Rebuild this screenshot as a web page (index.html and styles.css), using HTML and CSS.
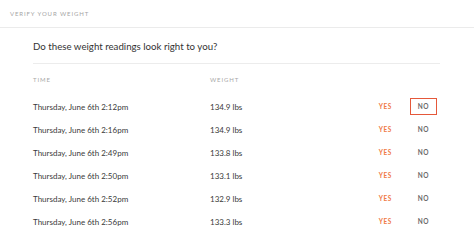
FILE: index.html
```html
<!DOCTYPE html>
<html lang="en">
<head>
  <meta charset="UTF-8">
  <title>Verify your weight</title>
  <link rel="stylesheet" href="styles.css">
</head>
<body>

  <!-- Titre -->
  <div class="header">VERIFY YOUR WEIGHT</div>

  <div class="content">
    <div class="question">Do these weight readings look right to you?</div>

    <div class="row labels">
      <span class="time">TIME</span>
      <span class="weight">WEIGHT</span>
    </div>

    <div class="row">
      <span class="time">Thursday, June 6th 2:12pm</span>
      <span class="weight">134.9 lbs</span>
      <button class="yes">YES</button>
      <button class="no selected">NO</button>
    </div>
    <div class="row">
      <span class="time">Thursday, June 6th 2:16pm</span>
      <span class="weight">134.9 lbs</span>
      <button class="yes">YES</button>
      <button class="no">NO</button>
    </div>
    <div class="row">
      <span class="time">Thursday, June 6th 2:49pm</span>
      <span class="weight">133.8 lbs</span>
      <button class="yes">YES</button>
      <button class="no">NO</button>
    </div>
    <div class="row">
      <span class="time">Thursday, June 6th 2:50pm</span>
      <span class="weight">133.1 lbs</span>
      <button class="yes">YES</button>
      <button class="no">NO</button>
    </div>
    <div class="row">
      <span class="time">Thursday, June 6th 2:52pm</span>
      <span class="weight">132.9 lbs</span>
      <button class="yes">YES</button>
      <button class="no">NO</button>
    </div>
    <div class="row">
      <span class="time">Thursday, June 6th 2:56pm</span>
      <span class="weight">133.3 lbs</span>
      <button class="yes">YES</button>
      <button class="no">NO</button>
    </div>
  </div>

</body>
</html>
```

FILE: styles.css
```css
body {
  margin: 0;
  font-family: Lato, "Open Sans", sans-serif;
  background: #ffffff;
  color: #3a3a3a;
}

.header {
  height: 27px;
  display: flex;
  align-items: center;
  padding-left: 10px;
  font-size: 6px;
  letter-spacing: 0.9px;
  color: #a5a5a5;
  border-bottom: 1px solid #ebebeb;
}

.content {
  width: 407px;
  margin-left: 33px;
}

.question {
  height: 35px;
  display: flex;
  align-items: center;
  font-size: 9.7px;
  color: #333333;
  border-bottom: 1px solid #ececec;
}

.row {
  height: 23px;
  display: flex;
  align-items: center;
  font-size: 8px;
}

.labels {
  height: 31px;
  font-size: 6px;
  letter-spacing: 0.9px;
  color: #a8a8a8;
}

.time {
  width: 177px;
}

.weight {
  flex: 1;
}

button {
  font-family: inherit;
  font-size: 6.5px;
  font-weight: bold;
  letter-spacing: 0.6px;
  background: none;
  border: 1px solid transparent;
  padding: 0;
  cursor: pointer;
}

.yes {
  color: #f07a45;
  margin-right: 17px;
}

.no {
  width: 27px;
  height: 17px;
  color: #6a6a6a;
  margin-right: 3px;
}

.no.selected {
  border-color: #e5583a;
}
```
